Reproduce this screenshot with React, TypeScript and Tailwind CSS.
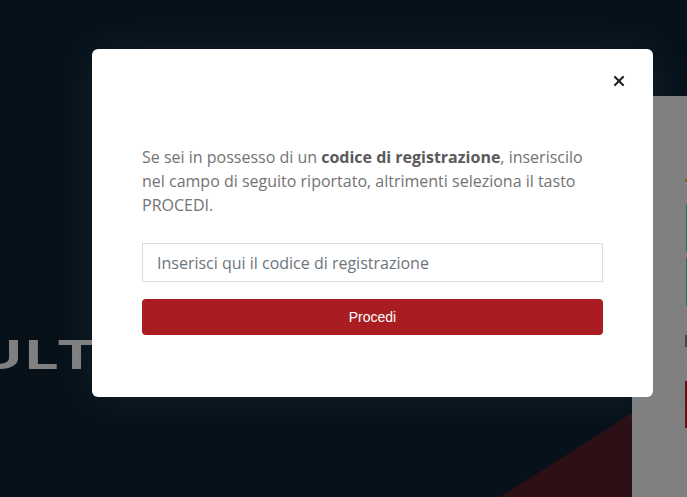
import { X } from "lucide-react";

export default function App() {
	return (
		<div className="relative h-[497px] w-[687px] overflow-hidden bg-[#06111a] font-['Open_Sans',sans-serif]">
			{/* page behind the dialog */}
			<div className="flex h-full">
				<div className="relative flex-1 overflow-hidden">
					<h1 className="mt-[335px] -ml-[22px] inline-block origin-left scale-x-[1.5] whitespace-nowrap font-['Inter',sans-serif] text-[40px] font-bold leading-[40px] tracking-[2px] text-[#808080]">
						ULTIMI
					</h1>
					<svg className="absolute bottom-0 right-0" width="140" height="90" viewBox="0 0 140 90">
						<polygon points="8,90 140,6 140,90" fill="#2c1015" />
					</svg>
				</div>
				<div className="mt-[96px] flex w-[55px] flex-col items-end bg-[#808080]">
					<div className="mt-[83px] h-[3px] w-[2px] bg-[#8a5a2a]" />
					<div className="mt-[22px] h-[48px] w-[1px] bg-[#0b7a6e]" />
					<div className="mt-[6px] h-[48px] w-[1px] bg-[#0b7a6e]" />
					<div className="mt-[29px] h-[12px] w-[2px] bg-[#444]" />
					<div className="mt-[34px] h-[47px] w-[2px] bg-[#6a0f16]" />
				</div>
			</div>

			{/* dialog */}
			<div className="absolute left-[92px] top-[49px] w-[561px] rounded-[6px] bg-white px-[50px] pb-[62px] pt-[96px] shadow-[0_0_45px_rgba(120,140,160,0.13)]">
				<button className="absolute right-[26px] top-[24px] flex h-[16px] w-[16px] items-center justify-center text-[#222]">
					<X size={16} strokeWidth={3.2} />
				</button>
				<p className="text-[16px] leading-[24px] text-[#737373]">
					Se sei in possesso di un <strong className="font-bold text-[#5a5a5a]">codice di registrazione</strong>, inseriscilo nel campo di seguito riportato, altrimenti seleziona il tasto PROCEDI.
				</p>
				<input
					type="text"
					placeholder="Inserisci qui il codice di registrazione"
					className="mt-[26px] block h-[39px] w-full border border-[#dcdcdc] px-[14px] text-[16px] text-[#495057] outline-none placeholder:text-[#6c757d]"
				/>
				<button className="mt-[17px] block h-[36px] w-full rounded-[4px] bg-[#a91d22] font-['Liberation_Sans',sans-serif] text-[14px] text-white">
					Procedi
				</button>
			</div>
		</div>
	);
}
